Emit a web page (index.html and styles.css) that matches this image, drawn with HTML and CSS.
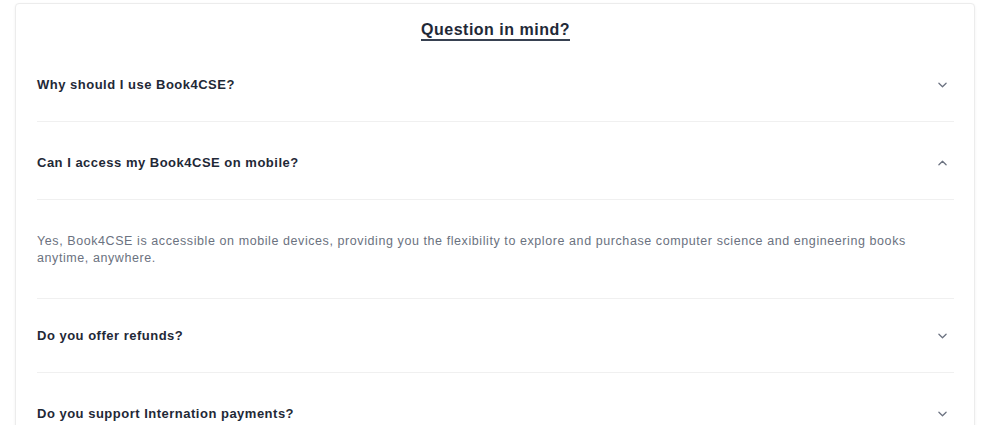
FILE: index.html
```html
<!DOCTYPE html>
<html lang="en">
<head>
<meta charset="utf-8">
<title>FAQ</title>
<link rel="stylesheet" href="styles.css">
</head>
<body>
<section class="faq-card">
  <h2 class="faq-title">Question in mind?</h2>
  <div class="faq-list">
    <div class="faq-item">
      <div class="faq-q"><span>Why should I use Book4CSE?</span>
        <svg class="chev" viewBox="0 0 10 6" width="9" height="6"><path d="M1 1l4 4 4-4" fill="none" stroke="#6b7280" stroke-width="1.4" stroke-linecap="round" stroke-linejoin="round"/></svg>
      </div>
    </div>
    <div class="faq-item open">
      <div class="faq-q"><span>Can I access my Book4CSE on mobile?</span>
        <svg class="chev" viewBox="0 0 10 6" width="9" height="6"><path d="M1 5l4-4 4 4" fill="none" stroke="#6b7280" stroke-width="1.4" stroke-linecap="round" stroke-linejoin="round"/></svg>
      </div>
      <div class="faq-a">Yes, Book4CSE is accessible on mobile devices, providing you the flexibility to explore and purchase computer science and engineering books anytime, anywhere.</div>
    </div>
    <div class="faq-item after-open">
      <div class="faq-q"><span>Do you offer refunds?</span>
        <svg class="chev" viewBox="0 0 10 6" width="9" height="6"><path d="M1 1l4 4 4-4" fill="none" stroke="#6b7280" stroke-width="1.4" stroke-linecap="round" stroke-linejoin="round"/></svg>
      </div>
    </div>
    <div class="faq-item">
      <div class="faq-q"><span>Do you support Internation payments?</span>
        <svg class="chev" viewBox="0 0 10 6" width="9" height="6"><path d="M1 1l4 4 4-4" fill="none" stroke="#6b7280" stroke-width="1.4" stroke-linecap="round" stroke-linejoin="round"/></svg>
      </div>
    </div>
  </div>
</section>
</body>
</html>
```
FILE: styles.css
```css
* { box-sizing: border-box; }
html, body { margin: 0; padding: 0; background: #ffffff; }
body {
  font-family: "Liberation Sans", Arial, sans-serif;
  padding: 3px 24px 0 15px;
  height: 425px;
  overflow: hidden;
}
.faq-card {
  border: 1px solid #ececec;
  border-radius: 4px;
  box-shadow: 0 1px 3px rgba(0,0,0,0.06);
  padding: 0 20px 0 21px;
  background: #fff;
}
.faq-title {
  margin: 16px auto 0;
  width: max-content;
  font-size: 16px;
  font-weight: 700;
  color: #1f2937;
  line-height: 19px;
  border-bottom: 2px solid #374151;
  letter-spacing: 0.5px;
}
.faq-list { margin-top: 3px; }
.faq-item { border-bottom: 1px solid #f0f0f0; }
.faq-q {
  display: flex;
  align-items: center;
  justify-content: space-between;
  padding: 31px 7px 26px 0;
  font-size: 13px;
  font-weight: 700;
  color: #1f2937;
  line-height: 20px;
  letter-spacing: 0.5px;
}
.faq-item.after-open .faq-q { padding-top: 27px; }
.faq-item.open .faq-q { border-bottom: 1px solid #f0f0f0; }
.faq-a {
  padding: 33px 20px 31px 0;
  font-size: 12.5px;
  color: #6b7280;
  line-height: 17px;
  letter-spacing: 0.58px;
}
.chev { flex: none; }
```
